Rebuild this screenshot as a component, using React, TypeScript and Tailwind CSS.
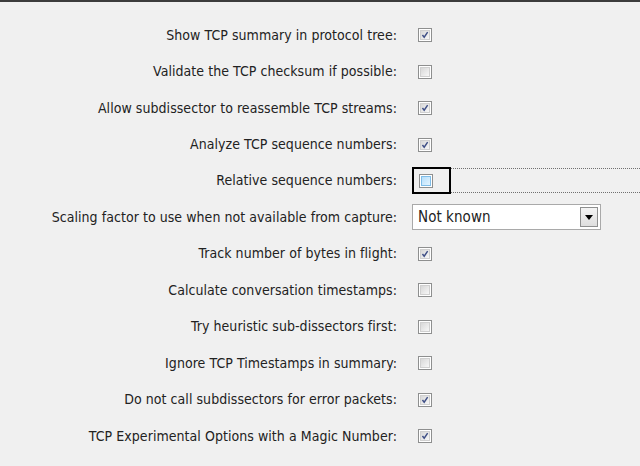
import React from 'react';

type Row =
  | { label: string; kind: 'check'; checked: boolean; focused?: boolean }
  | { label: string; kind: 'select'; value: string };

const rows: Row[] = [
  { label: 'Show TCP summary in protocol tree:', kind: 'check', checked: true },
  { label: 'Validate the TCP checksum if possible:', kind: 'check', checked: false },
  { label: 'Allow subdissector to reassemble TCP streams:', kind: 'check', checked: true },
  { label: 'Analyze TCP sequence numbers:', kind: 'check', checked: true },
  { label: 'Relative sequence numbers:', kind: 'check', checked: false, focused: true },
  { label: 'Scaling factor to use when not available from capture:', kind: 'select', value: 'Not known' },
  { label: 'Track number of bytes in flight:', kind: 'check', checked: true },
  { label: 'Calculate conversation timestamps:', kind: 'check', checked: false },
  { label: 'Try heuristic sub-dissectors first:', kind: 'check', checked: false },
  { label: 'Ignore TCP Timestamps in summary:', kind: 'check', checked: false },
  { label: 'Do not call subdissectors for error packets:', kind: 'check', checked: true },
  { label: 'TCP Experimental Options with a Magic Number:', kind: 'check', checked: true },
];

const CheckBox: React.FC<{ checked: boolean; hot?: boolean }> = ({ checked, hot }) => (
  <div className="w-[14px] h-[14px] border border-[#8e8f8f] bg-white p-[1px]">
    <div
      className={`w-full h-full border ${
        hot
          ? 'border-[#7fbde8] bg-gradient-to-br from-[#b5defa] to-[#e3f4ff]'
          : 'border-[#d0d0d0] bg-gradient-to-br from-[#d8d8d8] to-[#f7f7f7]'
      } flex items-center justify-center`}
    >
      {checked && (
        <svg width="10" height="10" viewBox="0 0 10 10">
          <path d="M1.8 5 L4 7.8 L8.3 1.5" stroke="#3f4f86" strokeWidth="1.8" fill="none" />
        </svg>
      )}
    </div>
  </div>
);

export default function App() {
  return (
    <div
      className="w-[640px] h-[466px] bg-[#f0f0f0] border-t-2 border-[#3c3c3c] overflow-hidden text-[14px] tracking-[0.05px] text-[#222]"
      style={{ fontFamily: '"DejaVu Sans Condensed", "DejaVu Sans", sans-serif' }}
    >
      <div className="pt-[15px] flex flex-col">
        {rows.map((r, i) => (
          <div key={i} className="flex items-center h-[36.45px]">
            <div className="w-[398px] text-right whitespace-nowrap pr-[1px]">{r.label}</div>
            <div className="ml-[14px] flex-1 flex items-center">
              {r.kind === 'check' && !r.focused && (
                <div className="ml-[6px]">
                  <CheckBox checked={r.checked} />
                </div>
              )}
              {r.kind === 'check' && r.focused && (
                <div className="flex items-stretch w-full">
                  <div className="w-[39px] h-[27px] border-2 border-black flex items-center pl-[5px]">
                    <CheckBox checked={r.checked} hot />
                  </div>
                  <div className="flex-1 my-[1px] border-y border-dotted border-[#707070]" />
                </div>
              )}
              {r.kind === 'select' && (
                <div className="w-[189px] h-[26px] border border-[#a9a9a9] bg-white flex items-center justify-between pl-[5px] pr-[2px]">
                  <span className="text-[15px]">{r.value}</span>
                  <div className="w-[18px] h-[20px] border border-[#8e8f8f] bg-gradient-to-b from-[#f4f4f4] to-[#dedede] flex items-center justify-center">
                    <svg width="8" height="5" viewBox="0 0 8 5">
                      <path d="M0 0 H8 L4 5 Z" fill="#000" />
                    </svg>
                  </div>
                </div>
              )}
            </div>
          </div>
        ))}
      </div>
    </div>
  );
}
